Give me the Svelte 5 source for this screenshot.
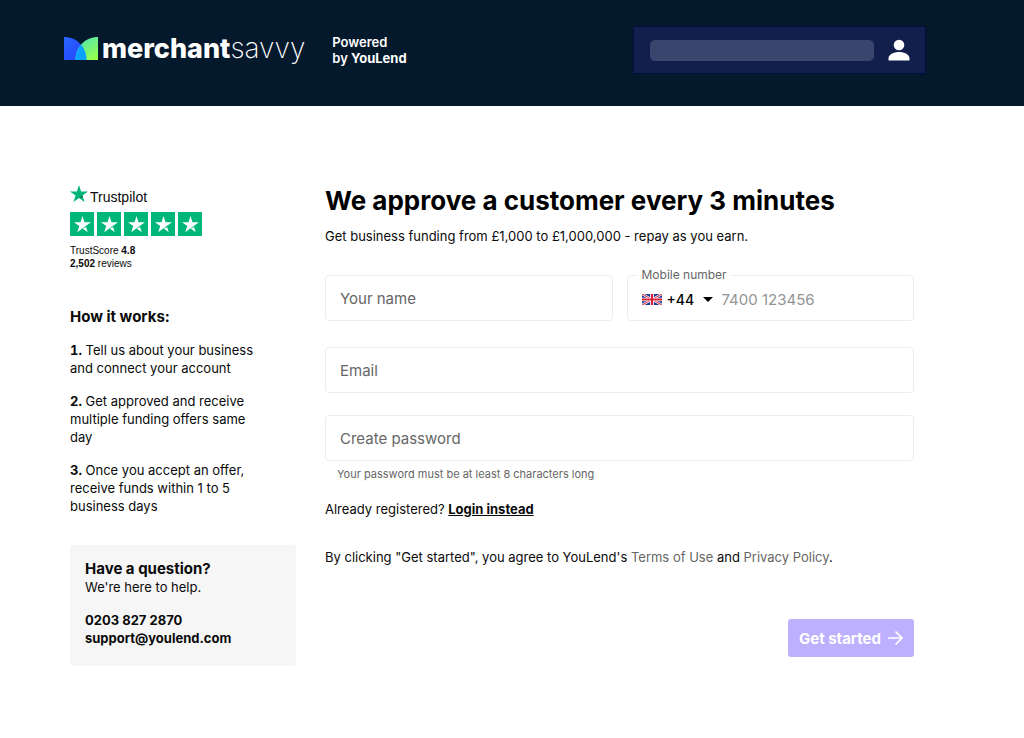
<script lang="ts">
	let name: string = '';
	let code: string = '+44';
	let phone: string = '';
	let email: string = '';
	let password: string = '';

	const steps: string[] = [
		'Tell us about your business and connect your account',
		'Get approved and receive multiple funding offers same day',
		'Once you accept an offer, receive funds within 1 to 5 business days'
	];

	const star = 'M12 0l2.800 8.700H24l-7.400 5.400 2.800 8.700L12 17.400l-7.400 5.400 2.800-8.700L0 8.700h9.200z';
</script>

<header>
	<a class="logo" href="/">
		<svg width="34" height="23" viewBox="0 0 34 23" aria-hidden="true">
			<defs>
				<linearGradient id="blue" x1="0" y1="0" x2="1" y2="1">
					<stop offset="0" stop-color="#2a66ff" />
					<stop offset="1" stop-color="#2340ff" />
				</linearGradient>
				<linearGradient id="green" x1="0.2" y1="0" x2="0.8" y2="1">
					<stop offset="0" stop-color="#4fe3b8" />
					<stop offset="1" stop-color="#97ff4a" />
				</linearGradient>
				<clipPath id="left">
					<path d="M0 0C13 0 22.500 10 22.500 23H0z" />
				</clipPath>
			</defs>
			<path d="M0 0C13 0 22.500 10 22.500 23H0z" fill="url(#blue)" />
			<path d="M34 0C21 0 11.500 10 11.500 23H34z" fill="url(#green)" />
			<path d="M34 0C21 0 11.500 10 11.500 23H34z" fill="#0aa2ff" clip-path="url(#left)" />
		</svg>
		<span class="wordmark"><b>merchant</b>savvy</span>
	</a>
	<div class="powered">Powered<br />by <b>YouLend</b></div>
	<button class="account" aria-label="Account">
		<span class="bar"></span>
		<svg width="22" height="22" viewBox="0 0 22 22" fill="#fff" aria-hidden="true">
			<circle cx="11" cy="6" r="5.300" />
			<path d="M.5 21.500v-2C.5 15.500 5.500 13 11 13s10.500 2.500 10.500 6.500v2z" />
		</svg>
	</button>
</header>

<main>
	<aside>
		<div class="trust">
			<div class="brand">
				<svg width="18" height="18" viewBox="0 0 24 24" aria-hidden="true">
					<path d={star} fill="#00b67a" />
					<path d="M17.200 16l-.7-2-4.500 3.400z" fill="#005128" />
				</svg>
				Trustpilot
			</div>
			<div class="stars">
				{#each [1, 2, 3, 4, 5] as n (n)}
					<span class="star">
						<svg width="17" height="17" viewBox="0 0 24 24" aria-hidden="true">
							<path d={star} fill="#fff" />
							<path d="M12 17.400l4.500-3.300.5 1.800z" fill="#00b67a" />
						</svg>
					</span>
				{/each}
			</div>
			<div class="score">TrustScore <b>4.8</b><br /><b>2,502</b> reviews</div>
		</div>

		<h2>How it works:</h2>
		{#each steps as step, i}
			<p class="step"><b>{i + 1}.</b> {step}</p>
		{/each}

		<div class="help">
			<h3>Have a question?</h3>
			<p>We're here to help.</p>
			<a href="tel:02038272870">0203 827 2870</a>
			<a href="mailto:support@youlend.com">support@youlend.com</a>
		</div>
	</aside>

	<form on:submit|preventDefault>
		<h1>We approve a customer every 3 minutes</h1>
		<p class="intro">Get business funding from £1,000 to £1,000,000 - repay as you earn.</p>

		<div class="row">
			<input class="field" type="text" placeholder="Your name" aria-label="Your name" bind:value={name} />
			<fieldset>
				<legend><label for="phone">Mobile number</label></legend>
				<svg width="20" height="11" viewBox="0 0 60 33" aria-hidden="true">
					<rect width="60" height="33" fill="#1f3a93" />
					<path d="M0 0l60 33M60 0L0 33" stroke="#fff" stroke-width="7" />
					<path d="M0 0l60 33M60 0L0 33" stroke="#d8203c" stroke-width="3" />
					<path d="M30 0v33M0 16.500h60" stroke="#fff" stroke-width="11" />
					<path d="M30 0v33M0 16.500h60" stroke="#d8203c" stroke-width="6" />
				</svg>
				<select aria-label="Country code" bind:value={code}>
					<option>+44</option>
				</select>
				<svg class="caret" width="10" height="5" viewBox="0 0 10 5" aria-hidden="true">
					<path d="M0 0h10L5 5z" />
				</svg>
				<input id="phone" type="tel" placeholder="7400 123456" bind:value={phone} />
			</fieldset>
		</div>

		<input class="field email" type="email" placeholder="Email" aria-label="Email" bind:value={email} />
		<input
			class="field"
			type="password"
			placeholder="Create password"
			aria-label="Create password"
			aria-describedby="hint"
			bind:value={password}
		/>
		<p class="hint" id="hint">Your password must be at least 8 characters long</p>

		<p class="login">Already registered? <a href="/login">Login instead</a></p>
		<p class="terms">
			By clicking "Get started", you agree to YouLend's <a href="/terms">Terms of Use</a> and
			<a href="/privacy">Privacy Policy</a>.
		</p>

		<button class="submit">
			Get started
			<svg width="16" height="16" viewBox="0 0 16 16" aria-hidden="true">
				<path d="M1 8h14M8.500 1.500L15 8l-6.500 6.500" fill="none" stroke="#fff" stroke-width="1.600" />
			</svg>
		</button>
	</form>
</main>

<style>
	:global(body) {
		margin: 0;
		background: #fff;
		color: #0a0a0a;
		font-family: Inter, 'Liberation Sans', sans-serif;
		font-size: 13px;
		line-height: 18px;
	}

	header {
		display: flex;
		align-items: flex-start;
		box-sizing: border-box;
		height: 106px;
		padding: 26px 98px 0 64px;
		background: #05192d;
		color: #fff;
	}

	.logo {
		display: flex;
		align-items: center;
		gap: 4px;
		height: 45px;
		color: #fff;
		text-decoration: none;
	}

	.wordmark {
		font-size: 28px;
		font-weight: 200;
		line-height: 45px;

		& b {
			font-size: 27px;
			font-weight: 800;
		}
	}

	.powered {
		margin: 8px 0 0 27px;
		font-size: 13px;
		font-weight: 600;
		line-height: 16px;

		& b {
			font-weight: 700;
		}
	}

	.account {
		display: flex;
		align-items: center;
		gap: 14px;
		box-sizing: border-box;
		width: 293px;
		height: 48px;
		margin-left: auto;
		padding: 0 15px 0 16px;
		border: 1px solid #030d42;
		border-radius: 2px;
		background: #121f4d;
	}

	.bar {
		flex: 1;
		height: 21px;
		border-radius: 5px;
		background: #3a446c;
	}

	main {
		display: grid;
		grid-template-columns: 226px 1fr;
		gap: 29px;
		padding: 79px 110px 72px 70px;
	}

	h1,
	h2,
	h3,
	p {
		margin: 0;
	}

	.trust {
		font-family: 'Liberation Sans', sans-serif;
	}

	.brand {
		display: flex;
		align-items: flex-start;
		gap: 2px;
		height: 26px;
		font-size: 14px;
		line-height: 24px;
	}

	.stars {
		display: flex;
		gap: 3px;
		margin-top: 1px;
	}

	.star {
		display: flex;
		align-items: center;
		justify-content: center;
		width: 24px;
		height: 24px;
		background: #00b67a;
	}

	.score {
		margin-top: 8px;
		font-size: 10px;
		line-height: 13px;
	}

	h2 {
		margin-top: 38px;
		font-size: 15px;
		line-height: 18px;
	}

	.step {
		width: 190px;
		margin-top: 15px;

		& b {
			font-variant-numeric: tabular-nums;
		}
	}

	.help {
		display: flex;
		flex-direction: column;
		margin-top: 30px;
		padding: 15px 15px 19px;
		border-radius: 3px;
		background: #f6f6f6;

		& p {
			margin-bottom: 15px;
		}

		& a {
			color: inherit;
			font-weight: 700;
			text-decoration: none;
		}
	}

	h3 {
		font-size: 15px;
		line-height: 18px;
	}

	form {
		display: flex;
		flex-direction: column;
	}

	h1 {
		color: #000;
		font-size: 26px;
		line-height: 32px;
	}

	.intro {
		margin-top: 10px;
	}

	.row {
		display: grid;
		grid-template-columns: 1fr 1fr;
		gap: 14px;
		align-items: end;
		margin-top: 22px;
	}

	input,
	select {
		min-width: 0;
		font-family: inherit;
		font-size: 15px;
	}

	.field {
		box-sizing: border-box;
		width: 100%;
		height: 46px;
		padding: 0 14px;
		border: 1px solid #ececec;
		border-radius: 4px;
		background: #fff;

		&::placeholder {
			color: #666;
		}
	}

	fieldset {
		display: flex;
		align-items: center;
		box-sizing: border-box;
		min-width: 0;
		height: 54px;
		margin: 0;
		padding: 0 14px 4px;
		border: 1px solid #ececec;
		border-radius: 4px;

		& input {
			flex: 1;
			padding: 0;
			border: 0;
			background: none;
		}

		& input::placeholder {
			color: #949494;
		}
	}

	legend {
		padding: 0 5px;
		margin-left: -5px;
		color: #666;
		font-size: 12px;
		line-height: 16px;
	}

	select {
		width: 30px;
		margin: 0 6px 0 5px;
		padding: 0;
		border: 0;
		appearance: none;
		background: none;
		color: #000;
		font-size: 14px;
		font-weight: 500;
	}

	.caret {
		margin-right: 9px;
	}

	.email {
		margin: 26px 0 22px;
	}

	.hint {
		margin: 4px 0 0 12px;
		color: #666;
		font-size: 11px;
	}

	.login {
		margin-top: 17px;

		& a {
			color: inherit;
			font-weight: 700;
		}
	}

	.terms {
		margin-top: 30px;

		& a {
			color: #666;
			text-decoration: none;
		}
	}

	.submit {
		display: flex;
		align-items: center;
		gap: 6px;
		align-self: flex-end;
		height: 38px;
		margin-top: 53px;
		padding: 0 11px;
		border: 0;
		border-radius: 3px;
		background: #bdb0ff;
		color: #fff;
		font-family: inherit;
		font-size: 15px;
		font-weight: 700;
	}
</style>
